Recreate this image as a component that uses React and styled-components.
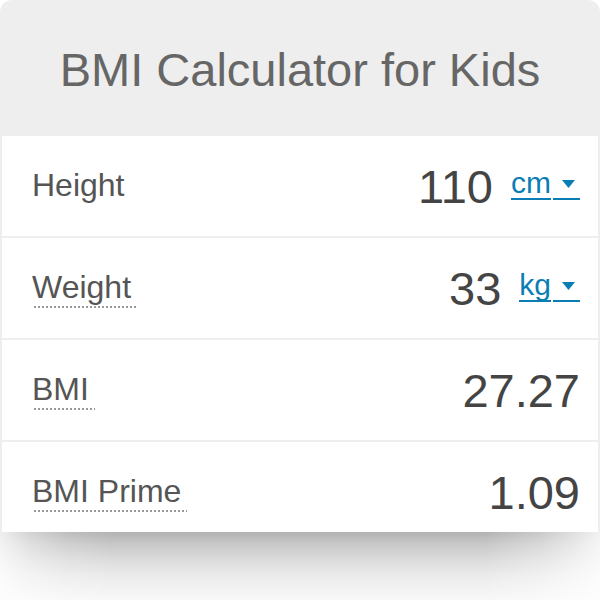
import React from "react";
import styled, { createGlobalStyle } from "styled-components";

const FONT = `"Liberation Sans", Arimo, Arial, Helvetica, sans-serif`;

const GlobalStyle = createGlobalStyle`
  html, body {
    margin: 0;
    padding: 0;
    background: #ffffff;
  }
  body {
    font-family: ${FONT};
  }
`;

const rows = [
  { label: "Height", value: "110", unit: "cm", dotted: false },
  { label: "Weight", value: "33", unit: "kg", dotted: true },
  { label: "BMI", value: "27.27", dotted: true },
  { label: "BMI Prime", value: "1.09", dotted: true },
];

function Caret() {
  return (
    <svg width="13" height="8" viewBox="0 0 13 8">
      <path d="M0 0 H13 L6.5 8 Z" fill="currentColor" />
    </svg>
  );
}

function App() {
  return (
    <>
      <GlobalStyle />
      <Page>
        <Card>
          <Header>
            <Title>BMI Calculator for Kids</Title>
          </Header>
          <Rows>
            {rows.map((row) => (
              <Row key={row.label}>
                <Label $dotted={row.dotted}>{row.label}</Label>
                <ValueGroup>
                  <Value>{row.value}</Value>
                  {row.unit && (
                    <UnitLink>
                      <UnitText>{row.unit}</UnitText>
                      <CaretBox>
                        <Caret />
                      </CaretBox>
                    </UnitLink>
                  )}
                </ValueGroup>
              </Row>
            ))}
          </Rows>
        </Card>
        <CardShadow />
      </Page>
    </>
  );
}

export default App;

const Page = styled.div`
  width: 600px;
  font-family: ${FONT};
`;

const Card = styled.div`
  height: 532px;
  overflow: hidden;
  background: #eeeeee;
  padding: 0 2px;
  box-sizing: border-box;
  border-radius: 12px 12px 0 0;
`;

const shadowMask = `linear-gradient(
    to right,
    rgba(0, 0, 0, 0.22) 0px,
    rgba(0, 0, 0, 0.6) 33px,
    rgba(0, 0, 0, 0.85) 67px,
    #000 110px,
    #000 485px,
    rgba(0, 0, 0, 0.7) 540px,
    rgba(0, 0, 0, 0.45) 570px,
    rgba(0, 0, 0, 0.18) 600px
  )`;

const CardShadow = styled.div`
  height: 68px;
  background: linear-gradient(
    to bottom,
    rgba(0, 0, 0, 0.3) 0px,
    rgba(0, 0, 0, 0.215) 12px,
    rgba(0, 0, 0, 0.137) 28px,
    rgba(0, 0, 0, 0.08) 43px,
    rgba(0, 0, 0, 0.047) 58px,
    rgba(0, 0, 0, 0.027) 68px
  );
  -webkit-mask-image: ${shadowMask};
  mask-image: ${shadowMask};
`;

const Header = styled.div`
  height: 136px;
  box-sizing: border-box;
  padding-top: 3px;
  display: flex;
  align-items: center;
  justify-content: center;
`;

const Title = styled.h1`
  margin: 0;
  font-family: ${FONT};
  font-size: 47px;
  font-weight: 400;
  line-height: 1;
  color: #666666;
`;

const Rows = styled.div`
  display: grid;
  gap: 2px;
`;

const Row = styled.div`
  height: 100px;
  background: #ffffff;
  display: flex;
  align-items: center;
  justify-content: space-between;
  padding: 0 18px 0 30px;
`;

const Label = styled.span`
  display: inline-block;
  font-family: ${FONT};
  font-size: 32px;
  line-height: 36px;
  color: #555555;
  padding: 0 6px 3px 0;
  background-image: ${({ $dotted }) =>
    $dotted ? "linear-gradient(to right, #999999 50%, transparent 50%)" : "none"};
  background-size: 4px 2px;
  background-repeat: repeat-x;
  background-position: 2px bottom;
`;

const ValueGroup = styled.div`
  display: flex;
  align-items: center;
  gap: 18px;
`;

const Value = styled.span`
  font-family: ${FONT};
  font-size: 47px;
  line-height: 1;
  color: #444444;
`;

const UnitLink = styled.span`
  display: flex;
  font-family: ${FONT};
  color: #0b7db5;
  font-size: 30px;
  line-height: 1;
  margin-bottom: 4px;
  cursor: pointer;
`;

const UnitText = styled.span`
  border-bottom: 2px solid currentColor;
`;

const CaretBox = styled.span`
  display: flex;
  align-items: center;
  margin-left: 2px;
  padding: 2px 5px 0 9px;
  border-bottom: 2px solid currentColor;
`;
